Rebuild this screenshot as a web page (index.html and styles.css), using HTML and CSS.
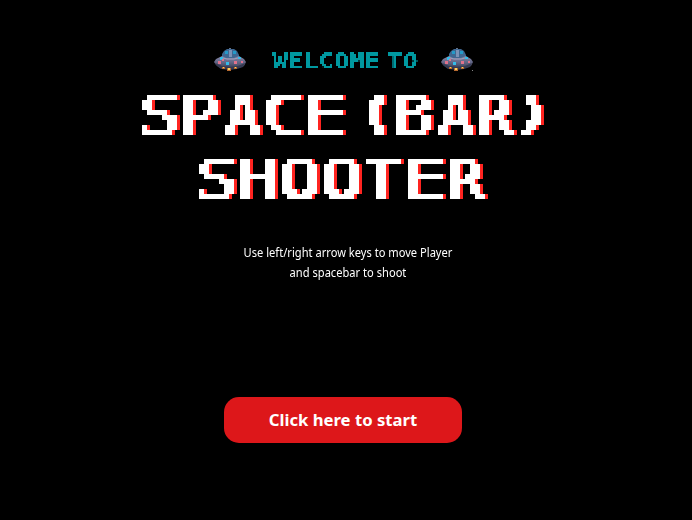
FILE: index.html
```html
<!DOCTYPE html>
<html lang="en">
<head>
<meta charset="utf-8">
<title>Space (Bar) Shooter</title>
<link rel="stylesheet" href="styles.css">
</head>
<body>
<svg class="defs" width="0" height="0" aria-hidden="true">
  <defs>
    <filter id="mosaic" x="0" y="0" width="45" height="60" filterUnits="userSpaceOnUse" primitiveUnits="userSpaceOnUse" color-interpolation-filters="sRGB">
      <feFlood x="2" y="2" width="1" height="1" flood-color="#fff" result="dot"/>
      <feComposite in="dot" in2="dot" operator="over" x="0" y="0" width="5" height="5"/>
      <feTile x="0" y="0" width="45" height="60" result="grid"/>
      <feComponentTransfer in="SourceGraphic"><feFuncA type="linear" slope="60" intercept="-27"/></feComponentTransfer>
      <feComposite in2="grid" operator="in"/>
      <feMorphology operator="dilate" radius="2"/>
    </filter>
    <filter id="mosaic-small" x="0" y="0" width="200" height="24" filterUnits="userSpaceOnUse" primitiveUnits="userSpaceOnUse" color-interpolation-filters="sRGB">
      <feFlood x="0" y="0" width="1" height="1" flood-color="#fff" result="dot"/>
      <feComposite in="dot" in2="dot" operator="over" x="0" y="0" width="2" height="2"/>
      <feTile x="0" y="0" width="200" height="24" result="grid"/>
      <feComponentTransfer in="SourceGraphic"><feFuncA type="linear" slope="20" intercept="-8"/></feComponentTransfer>
      <feComposite in2="grid" operator="in" result="a"/>
      <feOffset in="a" dx="1" dy="0" result="b"/>
      <feMerge result="c"><feMergeNode in="a"/><feMergeNode in="b"/></feMerge>
      <feOffset in="c" dx="0" dy="1" result="d"/>
      <feMerge><feMergeNode in="c"/><feMergeNode in="d"/></feMerge>
    </filter>
    <linearGradient id="hull" x1="0" y1="0" x2="0" y2="1"><stop stop-color="#8588aa"/><stop offset=".5" stop-color="#626584"/><stop offset="1" stop-color="#30364e"/></linearGradient>
    <symbol id="ufo" viewBox="0 0 32 23">
      <path d="M15 0h2v2h-2z" fill="#65738a"/>
      <path d="M8 10V6l2-3 3-2h7l3 2 2 4v3z" fill="#3f6791"/>
      <path d="M11 3h3v3h-3zM19 3h3v3h-3z" fill="#249ac8"/>
      <path d="M15 2h3v7h-3z" fill="#7c92b6"/>
      <path d="M0 14l2-3 6-3 4 2h8l5-2 5 3 2 3-2 4-5 2-5 1h-8l-6-1-4-3z" fill="url(#hull)"/>
      <path d="M1 15l7 3 8 1 8-1 7-3-2 4-6 2-7 1-9-1-4-3z" fill="#343951"/>
      <path d="M9 10l4 1h7l4-1" stroke="#a3a0bd" fill="none"/>
      <path d="M6 9h3v3H6zM24 9h3v2h-3zM12 14h3v3h-3z" fill="#35bce9"/>
      <path d="M4 13h3v3H4zM8 11h2v2H8zM20 13h3v3h-3zM27 13h2v2h-2z" fill="#e0728c"/>
      <path d="M8 19h3v2H8zM13 20h4v3h-4zM20 19h3v2h-3z" fill="#b86b30"/>
      <path d="M9 19h1v1H9zM14 20h2v2h-2zM21 19h1v1h-1z" fill="#ffd45a"/>
    </symbol>
  </defs>
</svg>
<main class="screen">
  <div class="welcome">
    <svg class="ufo"><use href="#ufo"/></svg>
    <div class="greeting"><span>WELCOME TO</span></div>
    <svg class="ufo"><use href="#ufo"/></svg><span class="speck"></span>
  </div>
  <h1 class="title">
    <span class="line first"><b class="s"><i>S</i></b><b class="p"><i>P</i></b><b class="a"><i>A</i></b><b class="c"><i>C</i></b><b class="e"><i>E</i></b> <b class="open"><i>(</i></b><b class="b"><i>B</i></b><b class="a"><i>A</i></b><b class="r"><i>R</i></b><b class="close"><i>)</i></b></span>
    <span class="line second"><b class="s"><i>S</i></b><b class="h"><i>H</i></b><b class="o"><i>O</i></b><b class="o"><i>O</i></b><b class="t"><i>T</i></b><b class="e"><i>E</i></b><b class="r"><i>R</i></b></span>
  </h1>
  <p class="help">Use left/right arrow keys to move Player<br>and spacebar to shoot</p>
  <button class="start">Click here to start</button>
</main>
</body>
</html>
```
FILE: styles.css
```css
* { box-sizing: border-box; }
body { margin: 0; background: #000; color: #fff; overflow: hidden; }
.defs { display: block; }
.screen { width: 692px; height: 520px; padding-top: 48px; }
.welcome { display: flex; height: 24px; padding-left: 214px; }
.ufo { width: 32px; height: 23px; }
.speck { width: 1px; height: 1px; margin: 22px 0 0 -1px; background: #888; }
.greeting { width: 195px; height: 24px; padding: 1px 0 0 26px; color: #0099a0; font: bold 20.5px/24px "DejaVu Sans Mono", monospace; filter: url(#mosaic-small); }
.greeting span { display: inline-block; transform: scaleX(1.245); transform-origin: 0 0; white-space: nowrap; word-spacing: -6.5px; }
.title { margin: 0; font: 55px/60px "DejaVu Sans Mono", monospace; }
.line { display: flex; height: 60px; }
.first { margin: 13px 0 0 142px; }
.second { margin: 4px 0 0 199px; }
.line b { flex: none; width: 42px; height: 60px; font-weight: normal; filter: url(#mosaic) drop-shadow(3px 0 0 #ff2420); }
.line i { display: block; width: 33px; font-style: normal; transform-origin: 0 0; text-shadow: 1px 0 #fff, 2px 0 #fff, 3px 0 #fff; }
.line .s, .line .a { width: 41px; }
.first .p { width: 42px; }
.first .e { width: 61px; }
.line .open { width: 27px; font-size: 46px; }
.line .close { font-size: 46px; }
.line .open i, .line .close i { width: 27px; }
.line .open i { text-shadow: 1px 0 #fff, 2px 0 #fff, 3px 0 #fff, 4px 0 #fff, 5px 0 #fff; }
.s i { transform: translateX(-4.8px) scaleX(1.27); }
.p i { transform: translateX(-6.9px) scaleX(1.25); }
.a i { transform: translateX(-1px) scaleX(1.04); }
.c i { transform: translateX(-5.2px) scaleX(1.26); }
.e i { transform: translateX(-7px) scaleX(1.31); }
.b i { transform: translateX(-5.6px) scaleX(1.22); }
.r i { transform: translateX(-4.2px) scaleX(1.09); }
.h i { transform: translateX(-4.7px) scaleX(1.22); }
.o i { transform: translateX(-3.8px) scaleX(1.18); }
.t i { transform: translateX(-3px) scaleX(1.07); }
.open i { transform: translate(-12px, -3px) scaleX(1.2); }
.close i { transform: translate(-12px, -3px) scaleX(1.5); }
.help { margin: 34px 0 0 4px; height: 40px; text-align: center; font: 12.5px/20px "Noto Sans", sans-serif; transform: scaleX(.89); }
.start { display: block; width: 238px; height: 46px; margin: 114px 0 0 224px; border: 0; border-radius: 15px; background: #dd171a; color: #fff; font: bold 16.7px/46px "Noto Sans", sans-serif; padding: 0; }
```
